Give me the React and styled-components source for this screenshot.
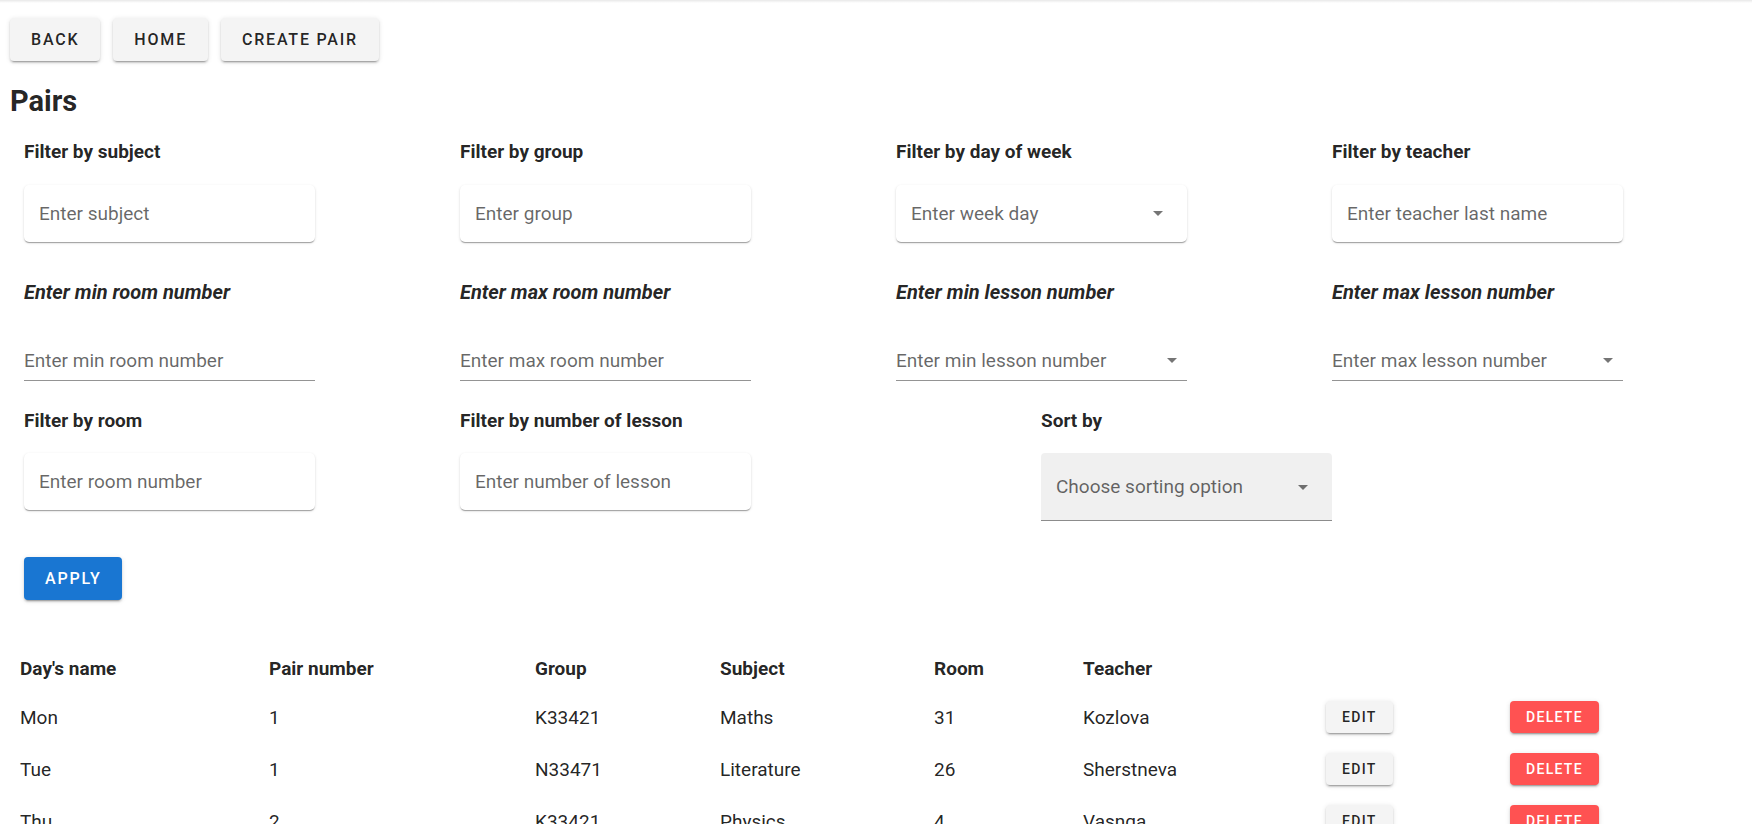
import React from 'react';
import styled, { createGlobalStyle } from 'styled-components';

const GlobalStyle = createGlobalStyle`
  body {
    margin: 0;
    background: #fff;
    font-family: Roboto, "Noto Sans", Arial, sans-serif;
    color: rgba(0, 0, 0, 0.87);
  }
`;

const TopEdge = styled.div`
  height: 3px;
  background: linear-gradient(to bottom, rgba(0, 0, 0, 0.09), rgba(0, 0, 0, 0));
`;

const Toolbar = styled.div`
  display: flex;
  gap: 13px;
  padding: 15px 10px 0;
`;

const Button = styled.button`
  display: inline-flex;
  align-items: center;
  justify-content: center;
  border: none;
  border-radius: 4px;
  font-family: Roboto, Arial, sans-serif;
  font-weight: 500;
  text-transform: uppercase;
  cursor: pointer;
  height: ${({ $small }) => ($small ? '32px' : '43px')};
  padding: ${({ $small }) => ($small ? '0 16px' : '0 21px')};
  font-size: ${({ $small }) => ($small ? '14px' : '16px')};
  letter-spacing: ${({ $small }) => ($small ? '1.3px' : '1.8px')};
  background: ${({ $tone }) =>
    $tone === 'primary' ? '#1976d2' : $tone === 'danger' ? '#ff5252' : '#f4f4f4'};
  color: ${({ $tone }) => ($tone === 'primary' || $tone === 'danger' ? '#fff' : 'rgba(0,0,0,0.87)')};
  box-shadow: 0px 3px 1px -2px rgba(0, 0, 0, 0.2), 0px 2px 2px 0px rgba(0, 0, 0, 0.14),
    0px 1px 5px 0px rgba(0, 0, 0, 0.12);
`;

const Title = styled.h2`
  margin: 23px 0 0 10px;
  font-size: 29px;
  line-height: 34px;
  font-weight: 700;
`;

const Filters = styled.div`
  display: flex;
  flex-direction: column;
  padding-left: 24px;
  margin-top: 22px;
`;

const FilterRow = styled.div`
  display: flex;
  align-items: flex-start;
  gap: 145px;
  margin-top: ${({ $space }) => $space || 0}px;
`;

const FilterCell = styled.div`
  display: flex;
  flex-direction: column;
  width: 291px;
  margin-left: ${({ $offset }) => $offset || 0}px;
`;

const Label = styled.div`
  line-height: 24px;
  font-weight: 700;
  white-space: nowrap;
  font-size: ${({ $italic }) => ($italic ? '20px' : '19px')};
  font-style: ${({ $italic }) => ($italic ? 'italic' : 'normal')};
  margin-bottom: ${({ $gap }) => $gap || 21}px;
`;

const PaperField = styled.div`
  position: relative;
  display: flex;
  align-items: center;
  height: 57px;
  padding: 0 15px;
  background: #fff;
  border-radius: 5px;
  box-shadow: 0px 2px 1px -1px rgba(0, 0, 0, 0.2), 0px 1px 1px 0px rgba(0, 0, 0, 0.14),
    0px 1px 3px 0px rgba(0, 0, 0, 0.12);
  font-size: 19px;
  color: rgba(0, 0, 0, 0.6);
`;

const LineField = styled.div`
  position: relative;
  display: flex;
  align-items: center;
  height: 37px;
  padding-bottom: 4px;
  box-sizing: border-box;
  border-bottom: 1px solid rgba(0, 0, 0, 0.42);
  font-size: 19px;
  color: rgba(0, 0, 0, 0.6);
`;

const FilledField = styled.div`
  position: relative;
  display: flex;
  align-items: center;
  height: 68px;
  padding: 0 15px;
  box-sizing: border-box;
  background: rgba(0, 0, 0, 0.06);
  border-radius: 4px 4px 0 0;
  border-bottom: 1px solid rgba(0, 0, 0, 0.42);
  font-size: 19px;
  color: rgba(0, 0, 0, 0.6);
`;

const Caret = styled.svg`
  position: absolute;
  right: ${({ $right }) => $right}px;
  top: 50%;
  width: 24px;
  height: 24px;
  margin-top: ${({ $shift }) => -12 + ($shift || 0)}px;
  fill: rgba(0, 0, 0, 0.54);
`;

const ApplyWrap = styled.div`
  padding-left: 24px;
  margin-top: 36px;
`;

const Table = styled.table`
  table-layout: fixed;
  width: 1748px;
  margin: 45px 0 0 4px;
  border-collapse: collapse;
`;

const HeadCell = styled.th`
  height: 46px;
  padding: 0 16px;
  text-align: left;
  font-size: 19px;
  font-weight: 700;
  white-space: nowrap;
`;

const Cell = styled.td`
  height: 52px;
  padding: 0 16px;
  font-size: 19px;
  font-weight: 400;
  vertical-align: middle;
  white-space: nowrap;
`;

const ArrowDown = ({ right, shift }) => (
  <Caret viewBox="0 0 24 24" $right={right} $shift={shift}>
    <path d="M7 10l5 5 5-5z" />
  </Caret>
);

const widths = [249, 266, 185, 214, 149, 243, 184, 258];

const rows = [
  ['Mon', '1', 'K33421', 'Maths', '31', 'Kozlova'],
  ['Tue', '1', 'N33471', 'Literature', '26', 'Sherstneva'],
  ['Thu', '2', 'K33421', 'Physics', '4', 'Vasnga'],
];

export default function App() {
  return (
    <>
      <GlobalStyle />
      <TopEdge />
      <Toolbar>
        <Button>Back</Button>
        <Button>Home</Button>
        <Button>Create pair</Button>
      </Toolbar>
      <Title>Pairs</Title>

      <Filters>
        <FilterRow>
          <FilterCell>
            <Label>Filter by subject</Label>
            <PaperField>Enter subject</PaperField>
          </FilterCell>
          <FilterCell>
            <Label>Filter by group</Label>
            <PaperField>Enter group</PaperField>
          </FilterCell>
          <FilterCell>
            <Label>Filter by day of week</Label>
            <PaperField>
              Enter week day
              <ArrowDown right={17} shift={-1} />
            </PaperField>
          </FilterCell>
          <FilterCell>
            <Label>Filter by teacher</Label>
            <PaperField>Enter teacher last name</PaperField>
          </FilterCell>
        </FilterRow>

        <FilterRow $space={38}>
          <FilterCell>
            <Label $italic $gap={40}>Enter min room number</Label>
            <LineField>Enter min room number</LineField>
          </FilterCell>
          <FilterCell>
            <Label $italic $gap={40}>Enter max room number</Label>
            <LineField>Enter max room number</LineField>
          </FilterCell>
          <FilterCell>
            <Label $italic $gap={40}>Enter min lesson number</Label>
            <LineField>
              Enter min lesson number
              <ArrowDown right={3} shift={-2} />
            </LineField>
          </FilterCell>
          <FilterCell>
            <Label $italic $gap={40}>Enter max lesson number</Label>
            <LineField>
              Enter max lesson number
              <ArrowDown right={3} shift={-2} />
            </LineField>
          </FilterCell>
        </FilterRow>

        <FilterRow $space={28}>
          <FilterCell>
            <Label $gap={20}>Filter by room</Label>
            <PaperField>Enter room number</PaperField>
          </FilterCell>
          <FilterCell>
            <Label $gap={20}>Filter by number of lesson</Label>
            <PaperField>Enter number of lesson</PaperField>
          </FilterCell>
          <FilterCell $offset={145}>
            <Label $gap={20}>Sort by</Label>
            <FilledField>
              Choose sorting option
              <ArrowDown right={17} />
            </FilledField>
          </FilterCell>
        </FilterRow>
      </Filters>

      <ApplyWrap>
        <Button $tone="primary">Apply</Button>
      </ApplyWrap>

      <Table>
        <colgroup>
          {widths.map((w, i) => (
            <col key={i} style={{ width: w }} />
          ))}
        </colgroup>
        <thead>
          <tr>
            <HeadCell>Day's name</HeadCell>
            <HeadCell>Pair number</HeadCell>
            <HeadCell>Group</HeadCell>
            <HeadCell>Subject</HeadCell>
            <HeadCell>Room</HeadCell>
            <HeadCell>Teacher</HeadCell>
            <HeadCell />
            <HeadCell />
          </tr>
        </thead>
        <tbody>
          {rows.map((r, i) => (
            <tr key={i}>
              {r.map((v, j) => (
                <Cell key={j}>{v}</Cell>
              ))}
              <Cell>
                <Button $small>Edit</Button>
              </Cell>
              <Cell>
                <Button $small $tone="danger">Delete</Button>
              </Cell>
            </tr>
          ))}
        </tbody>
      </Table>
    </>
  );
}
